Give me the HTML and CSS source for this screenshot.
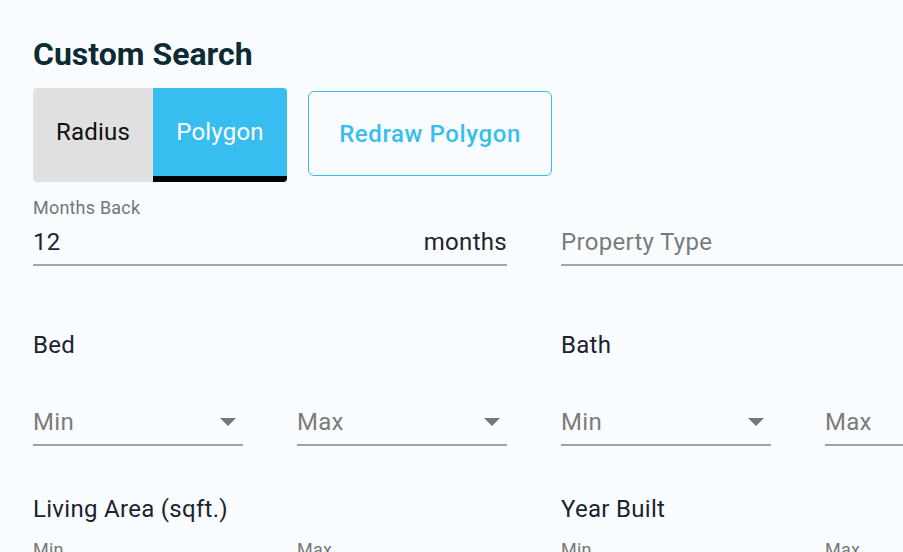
FILE: index.html
```html
<!DOCTYPE html>
<html lang="en">
<head>
<meta charset="utf-8">
<title>Custom Search</title>
<link rel="stylesheet" href="styles.css">
</head>
<body>
<div class="page">
  <h1 class="title">Custom Search</h1>

  <div class="mode-row">
    <div class="toggle">
      <button class="seg seg-radius" type="button">Radius</button>
      <button class="seg seg-polygon active" type="button">Polygon</button>
    </div>
    <button class="redraw" type="button">Redraw Polygon</button>
  </div>

  <div class="grid top-fields">
    <div class="field span2">
      <label class="small-label">Months Back</label>
      <div class="input"><span class="value">12</span><span class="value">months</span></div>
    </div>
    <div class="field span2 field-end">
      <div class="input placeholder">Property Type</div>
    </div>
  </div>

  <div class="grid group-head">
    <h3 class="group-title span2">Bed</h3>
    <h3 class="group-title span2">Bath</h3>
  </div>
  <div class="grid selects">
    <div class="select"><span>Min</span><span class="arrow"></span></div>
    <div class="select"><span>Max</span><span class="arrow"></span></div>
    <div class="select"><span>Min</span><span class="arrow"></span></div>
    <div class="select"><span>Max</span><span class="arrow"></span></div>
  </div>

  <div class="grid group-head group-head-2">
    <h3 class="group-title span2">Living Area (sqft.)</h3>
    <h3 class="group-title span2">Year Built</h3>
  </div>
  <div class="grid mini-labels">
    <span class="small-label">Min</span>
    <span class="small-label">Max</span>
    <span class="small-label">Min</span>
    <span class="small-label">Max</span>
  </div>
</div>
</body>
</html>
```

FILE: styles.css
```css
html, body {
  margin: 0;
  padding: 0;
}
body {
  background: #f9fdff;
  font-family: Roboto, "Liberation Sans", Arial, sans-serif;
  overflow: hidden;
  width: 903px;
  height: 552px;
}
.page {
  width: 1002px;
  padding: 36px 0 0 33px;
}
.title {
  margin: 0;
  font-size: 32px;
  line-height: 36px;
  font-weight: 700;
  color: #0d2b33;
}
.mode-row {
  display: flex;
  align-items: flex-start;
  gap: 21px;
  margin-top: 16px;
}
.toggle {
  display: flex;
  height: 94px;
  border-radius: 4px;
  overflow: hidden;
}
.seg {
  border: 0;
  margin: 0;
  padding: 0 0 6px 0;
  font-family: inherit;
  font-size: 24px;
  line-height: 28px;
  letter-spacing: 0.2px;
  display: flex;
  align-items: center;
  justify-content: center;
  background: #e0e0e0;
  color: #111111;
}
.seg-radius {
  width: 120px;
}
.seg-polygon {
  width: 134px;
}
.seg.active {
  background: #37bdf0;
  color: #ffffff;
  box-shadow: inset 0 -6px 0 #000000;
}
.redraw {
  margin-top: 3px;
  width: 244px;
  height: 85px;
  border: 1px solid #37bdf0;
  border-radius: 6px;
  background: transparent;
  color: #37bdf0;
  font-family: inherit;
  font-size: 24px;
  font-weight: 500;
  letter-spacing: 0.6px;
  line-height: 28px;
  padding: 0;
}
.grid {
  display: grid;
  grid-template-columns: 210px 210px 210px 210px;
  column-gap: 54px;
}
.span2 {
  grid-column: span 2;
}
.top-fields {
  margin-top: 15px;
  align-items: end;
}
.small-label {
  display: block;
  font-size: 18px;
  line-height: 21px;
  letter-spacing: 0.2px;
  color: #767676;
}
.input {
  margin-top: 10px;
  display: flex;
  justify-content: space-between;
  font-size: 24px;
  line-height: 28px;
  letter-spacing: 0.3px;
  padding-bottom: 8px;
  border-bottom: 2px solid #a6a6a6;
  color: #1f2330;
}
.input.placeholder {
  color: #7b7b7b;
}
.group-head {
  margin-top: 65px;
}
.group-head-2 {
  margin-top: 49px;
}
.group-title {
  margin: 0;
  font-size: 24px;
  line-height: 28px;
  letter-spacing: 0.3px;
  font-weight: 400;
  color: #1e2230;
}
.selects {
  margin-top: 49px;
}
.select {
  display: flex;
  justify-content: space-between;
  align-items: center;
  font-size: 24px;
  line-height: 28px;
  letter-spacing: 0.3px;
  color: #7b7b7b;
  padding-bottom: 8px;
  border-bottom: 2px solid #a2a2a2;
}
.arrow {
  width: 0;
  height: 0;
  border-left: 8.5px solid transparent;
  border-right: 8.5px solid transparent;
  border-top: 8.5px solid #767676;
  margin-right: 7px;
}
.mini-labels {
  margin-top: 16px;
}
```
